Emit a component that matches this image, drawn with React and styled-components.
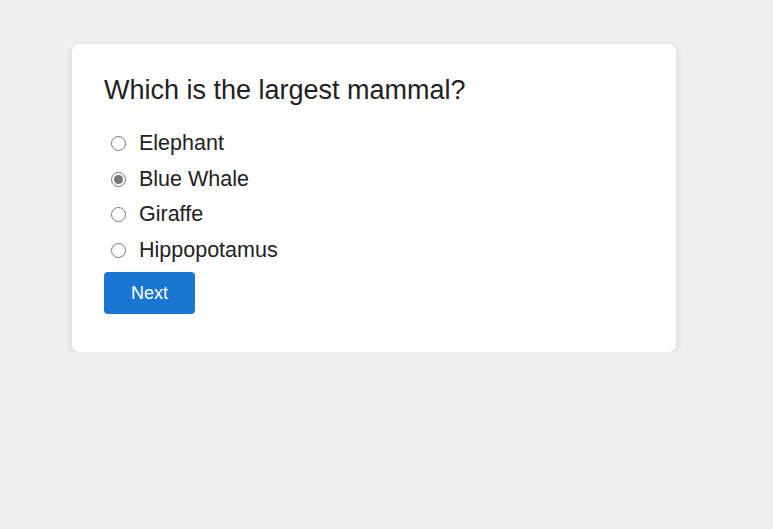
import React, { useState } from "react";
import styled, { createGlobalStyle } from "styled-components";

const GlobalStyle = createGlobalStyle`
  html, body {
    margin: 0;
    padding: 0;
    background: #f0f0f0;
    font-family: "Liberation Sans", Arial, sans-serif;
    color: #222;
  }
`;

const Page = styled.div`
  padding: 44px 0 0 72px;
`;

const Card = styled.div`
  box-sizing: border-box;
  width: 604px;
  background: #fff;
  border-radius: 8px;
  box-shadow: 0 2px 10px rgba(0, 0, 0, 0.12);
  padding: 31px 32px 38px 32px;
  display: flex;
  flex-direction: column;
  align-items: flex-start;
`;

const Question = styled.h2`
  margin: 0 0 26px 0;
  font-size: 27px;
  font-weight: 400;
  line-height: 30px;
  color: #222;
`;

const Options = styled.div`
  display: flex;
  flex-direction: column;
  gap: 11.67px;
  margin-bottom: 10px;
`;

const Option = styled.label`
  display: flex;
  align-items: center;
  font-size: 21.5px;
  line-height: 24px;
  height: 24px;
  color: #222;
  cursor: pointer;
`;

const Radio = styled.input.attrs({ type: "radio" })`
  width: 15px;
  height: 15px;
  margin: 1px 13px 0 7px;
  accent-color: #767676;
`;

const NextButton = styled.button`
  font-family: "Liberation Sans", Arial, sans-serif;
  font-size: 18px;
  line-height: 22px;
  padding: 10px 27px;
  background: #1976d2;
  color: #fff;
  border: none;
  border-radius: 4px;
  cursor: pointer;
`;

const choices = ["Elephant", "Blue Whale", "Giraffe", "Hippopotamus"];

export default function App() {
  const [selected, setSelected] = useState("Blue Whale");
  return (
    <>
      <GlobalStyle />
      <Page>
        <Card>
          <Question>Which is the largest mammal?</Question>
          <Options>
            {choices.map((c) => (
              <Option key={c}>
                <Radio
                  name="answer"
                  checked={selected === c}
                  onChange={() => setSelected(c)}
                />
                {c}
              </Option>
            ))}
          </Options>
          <NextButton>Next</NextButton>
        </Card>
      </Page>
    </>
  );
}
